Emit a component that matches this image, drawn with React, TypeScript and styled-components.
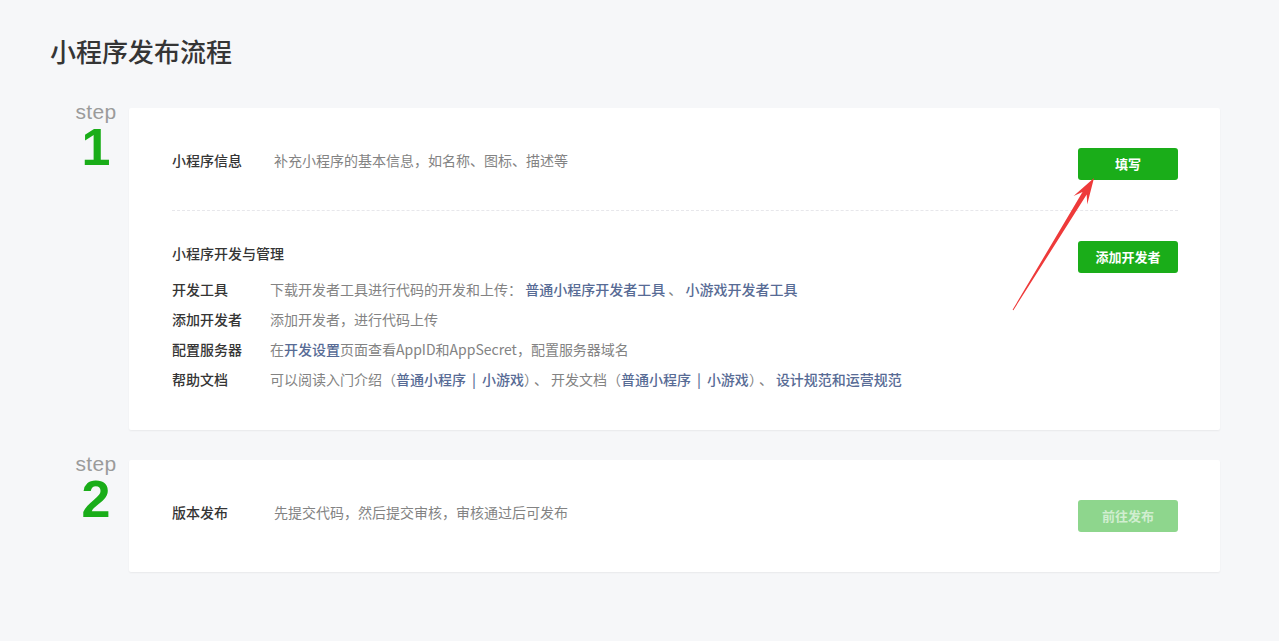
import React from "react";
import styled, { createGlobalStyle } from "styled-components";

const GlobalStyle = createGlobalStyle`
  html, body {
    margin: 0;
    padding: 0;
    background: #f6f7f9;
  }
  body {
    font-family: "Noto Sans CJK SC", "Liberation Sans", sans-serif;
    color: #353535;
  }
`;

const Page = styled.div`
  padding: 33px 59px 60px 50px;
  min-height: 641px;
  box-sizing: border-box;
`;

const Title = styled.h1`
  margin: 0 0 39px;
  font-size: 26px;
  line-height: 36px;
  font-weight: 500;
  color: #353535;
`;

const StepRow = styled.div`
  display: flex;
  align-items: flex-start;
  margin-bottom: 30px;
`;

const StepCol = styled.div`
  width: 79px;
  flex: none;
  display: flex;
  justify-content: flex-end;
  padding-right: 11px;
  box-sizing: border-box;
  margin-top: -7px;
`;

const StepBadge = styled.div`
  width: 44px;
  text-align: center;
  font-family: "Liberation Sans", "Helvetica Neue", Arial, sans-serif;
`;

const StepWord = styled.div`
  font-size: 21px;
  line-height: 22px;
  letter-spacing: 0.3px;
  color: #9b9b9b;
`;

const StepNum = styled.div`
  font-size: 52px;
  line-height: 44px;
  font-weight: 700;
  color: #1aad19;
  margin-top: 2px;
`;

const Card = styled.div<{ $bottom?: number }>`
  position: relative;
  flex: 1;
  background: #fff;
  border-radius: 2px;
  box-shadow: 0 1px 2px rgba(0, 0, 0, 0.06);
  padding: 40px 42px ${(p) => p.$bottom ?? 40}px 43px;
`;

const Row = styled.div`
  display: flex;
  align-items: flex-start;
  height: 32px;
  font-size: 14px;
  line-height: 24px;
`;

const Label = styled.div<{ $w: number }>`
  width: ${(p) => p.$w}px;
  flex: none;
  font-weight: 500;
  color: #353535;
`;

const Desc = styled.div`
  flex: 1;
  color: #838383;
`;

const Button = styled.button<{ $disabled?: boolean }>`
  width: 100px;
  height: 32px;
  flex: none;
  border: 0;
  border-radius: 3px;
  padding: 0;
  font-family: inherit;
  font-size: 13px;
  line-height: 32px;
  font-weight: 700;
  cursor: pointer;
  background: ${(p) => (p.$disabled ? "#8ed68d" : "#1aad19")};
  color: ${(p) => (p.$disabled ? "rgba(255,255,255,0.6)" : "#fff")};
`;

const Divider = styled.div`
  border-top: 1px dashed #e7e7eb;
  margin: 30px 0 30px;
`;

const Section = styled.div`
  display: flex;
  align-items: flex-start;
`;

const SectionBody = styled.div`
  flex: 1;
`;

const SectionTitle = styled.div`
  font-size: 14px;
  line-height: 24px;
  font-weight: 500;
  color: #353535;
  margin-bottom: 9px;
`;

const ListRow = styled.div`
  display: flex;
  font-size: 14px;
  line-height: 30px;
`;

const Link = styled.a`
  color: #576b95;
  font-weight: 500;
  text-decoration: none;
`;

const Sep = styled.span`
  margin: 0 6px;
`;

const Punct = styled.span`
  margin: 0 3px;
`;

const Arrow = styled.svg`
  position: absolute;
  left: 870px;
  top: 60px;
  width: 110px;
  height: 160px;
  pointer-events: none;
`;

export default function App() {
  return (
    <>
      <GlobalStyle />
      <Page>
        <Title>小程序发布流程</Title>

        <StepRow>
          <StepCol>
            <StepBadge>
              <StepWord>step</StepWord>
              <StepNum>1</StepNum>
            </StepBadge>
          </StepCol>
          <Card $bottom={36}>
            <Row>
              <Label $w={102}>小程序信息</Label>
              <Desc>补充小程序的基本信息，如名称、图标、描述等</Desc>
              <Button>填写</Button>
            </Row>
            <Divider />
            <Section>
              <SectionBody>
                <SectionTitle>小程序开发与管理</SectionTitle>
                <ListRow>
                  <Label $w={98}>开发工具</Label>
                  <Desc>
                    下载开发者工具进行代码的开发和上传：{" "}
                    <Link>普通小程序开发者工具</Link> 、{" "}
                    <Link>小游戏开发者工具</Link>
                  </Desc>
                </ListRow>
                <ListRow>
                  <Label $w={98}>添加开发者</Label>
                  <Desc>添加开发者，进行代码上传</Desc>
                </ListRow>
                <ListRow>
                  <Label $w={98}>配置服务器</Label>
                  <Desc>
                    在<Link>开发设置</Link>页面查看AppID和AppSecret，配置服务器域名
                  </Desc>
                </ListRow>
                <ListRow>
                  <Label $w={98}>帮助文档</Label>
                  <Desc>
                    可以阅读入门介绍（
                    <Link>
                      普通小程序<Sep>|</Sep>小游戏
                    </Link>
                    ）<Punct>、</Punct>开发文档（
                    <Link>
                      普通小程序<Sep>|</Sep>小游戏
                    </Link>
                    ）<Punct>、</Punct>
                    <Link>设计规范和运营规范</Link>
                  </Desc>
                </ListRow>
              </SectionBody>
              <Button>添加开发者</Button>
            </Section>
            <Arrow viewBox="0 0 110 160">
              <polygon
                points="13.6,141.8 83.5,24.0 74.6,28.0 95,10 88.2,36.4 87.7,26.6 14.4,142.2"
                fill="#ee3a3a"
              />
            </Arrow>
          </Card>
        </StepRow>

        <StepRow>
          <StepCol>
            <StepBadge>
              <StepWord>step</StepWord>
              <StepNum>2</StepNum>
            </StepBadge>
          </StepCol>
          <Card>
            <Row>
              <Label $w={102}>版本发布</Label>
              <Desc>先提交代码，然后提交审核，审核通过后可发布</Desc>
              <Button $disabled>前往发布</Button>
            </Row>
          </Card>
        </StepRow>
      </Page>
    </>
  );
}
